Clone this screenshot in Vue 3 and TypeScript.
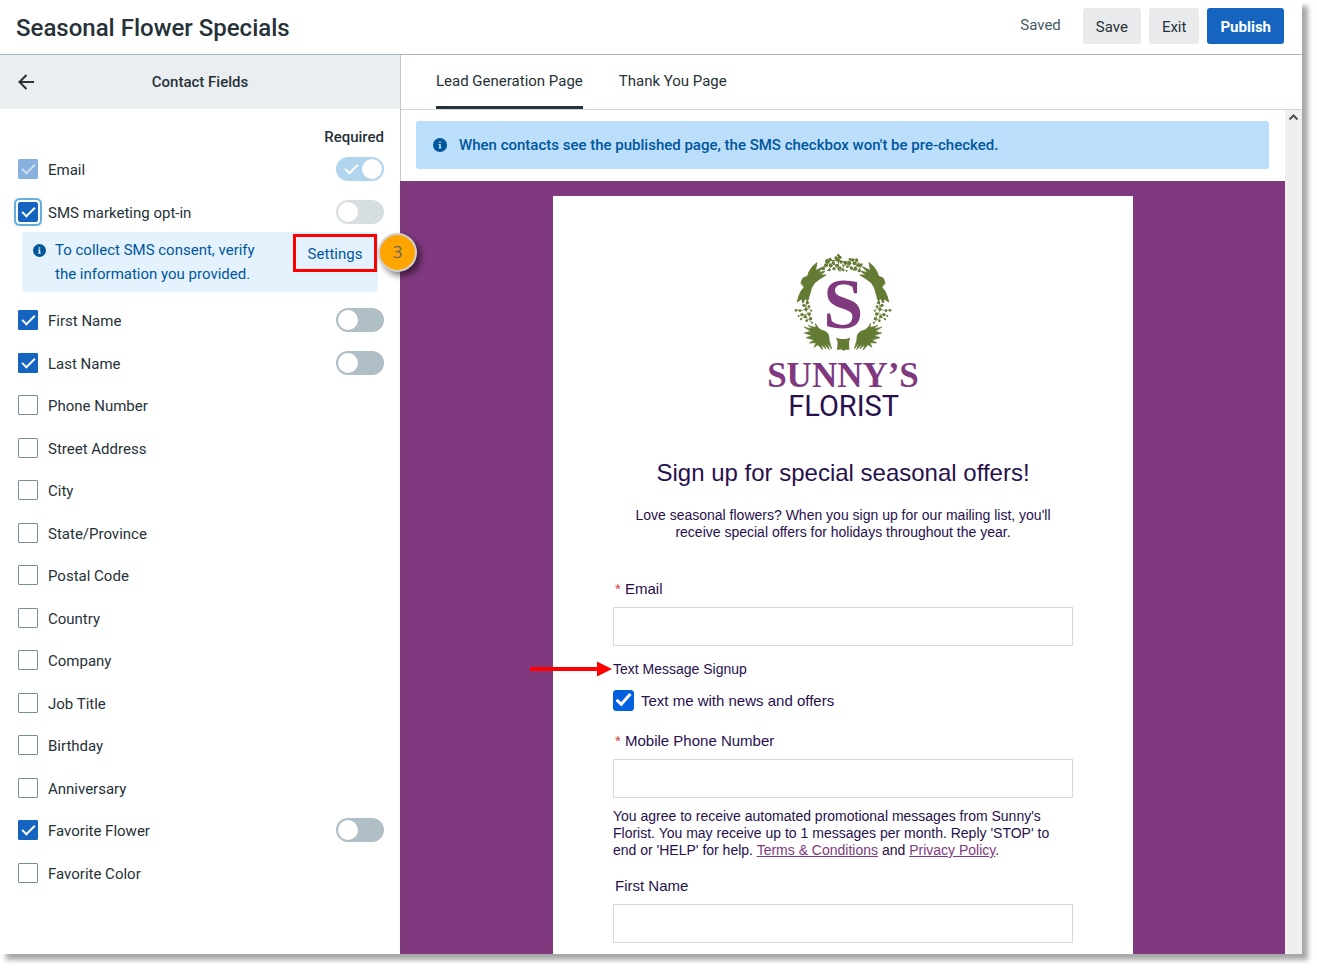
<script setup lang="ts">
import { ref } from 'vue'

interface ContactField {
  id: string
  label: string
  checked: boolean
  locked?: boolean
  toggle?: boolean
  required?: boolean
  toggleLocked?: boolean
  note?: boolean
}

const fields = ref<ContactField[]>([
  { id: 'email', label: 'Email', checked: true, locked: true, toggle: true, required: true, toggleLocked: true },
  { id: 'sms', label: 'SMS marketing opt-in', checked: true, toggle: true, toggleLocked: true, note: true },
  { id: 'first', label: 'First Name', checked: true, toggle: true },
  { id: 'last', label: 'Last Name', checked: true, toggle: true },
  { id: 'phone', label: 'Phone Number', checked: false },
  { id: 'street', label: 'Street Address', checked: false },
  { id: 'city', label: 'City', checked: false },
  { id: 'state', label: 'State/Province', checked: false },
  { id: 'postal', label: 'Postal Code', checked: false },
  { id: 'country', label: 'Country', checked: false },
  { id: 'company', label: 'Company', checked: false },
  { id: 'job', label: 'Job Title', checked: false },
  { id: 'birthday', label: 'Birthday', checked: false },
  { id: 'anniversary', label: 'Anniversary', checked: false },
  { id: 'flower', label: 'Favorite Flower', checked: true, toggle: true },
  { id: 'color', label: 'Favorite Color', checked: false },
])

const tabs = ['Lead Generation Page', 'Thank You Page']
const activeTab = ref(tabs[0])
const textMe = ref(true)
const email = ref('')
const mobile = ref('')
const firstName = ref('')

// Small blossoms on the left side of the wreath: x, y, radius
const berries: number[][] = [
  [168, 211, 4], [180, 212, 4], [192, 196, 5], [202, 188, 5], [186, 224, 5], [198, 208, 5], [207, 200, 4],
  [183, 238, 3], [196, 230, 5], [208, 222, 5], [212, 236, 5], [200, 242, 4], [216, 248, 3], [204, 174, 4],
  [190, 185, 3], [176, 228, 3], [214, 212, 3],
]
// Blossoms along the top of the wreath
const blossoms: number[][] = [
  [250, 86, 5], [258, 76, 6], [262, 64, 7], [270, 58, 5], [272, 76, 6], [268, 90, 4], [280, 68, 5],
  [282, 86, 5], [290, 76, 5], [294, 60, 6], [288, 54, 5], [300, 52, 5], [295, 46, 4], [303, 66, 5],
  [300, 84, 5], [309, 76, 3], [310, 90, 4], [316, 68, 6], [322, 80, 4], [320, 92, 3], [328, 70, 6],
  [334, 84, 5], [338, 60, 5], [344, 70, 6], [350, 60, 5], [346, 86, 6], [356, 76, 6], [364, 74, 4],
  [358, 92, 5], [330, 58, 4],
]
</script>

<template>
  <div class="stage">
    <div class="window">
      <header class="topbar">
        <h1>Seasonal Flower Specials</h1>
        <span class="saved">Saved</span>
        <div class="actions">
          <button type="button">Save</button>
          <button type="button">Exit</button>
          <button type="button" class="primary">Publish</button>
        </div>
      </header>

      <div class="body">
        <aside class="sidebar">
          <div class="panel-head">
            <button type="button" class="back" aria-label="Back">
              <svg width="16" height="16" viewBox="0 0 16 16" fill="none" stroke="#263238" stroke-width="2">
                <path d="M16 8H1.5M8.500 1L1.500 8L8.500 15" />
              </svg>
            </button>
            <h2>Contact Fields</h2>
          </div>
          <div class="required">Required</div>
          <ul class="fields">
            <li v-for="f in fields" :key="f.id">
              <div class="row">
                <input
                  :id="f.id"
                  v-model="f.checked"
                  type="checkbox"
                  class="box"
                  :class="{ focused: f.note }"
                  :disabled="f.locked"
                />
                <label :for="f.id">{{ f.label }}</label>
                <input
                  v-if="f.toggle"
                  v-model="f.required"
                  type="checkbox"
                  role="switch"
                  class="switch"
                  :aria-label="f.label + ' required'"
                  :disabled="f.toggleLocked"
                />
              </div>
              <div v-if="f.note" class="note">
                <svg class="info" width="13" height="13" viewBox="0 0 14 14">
                  <circle cx="7" cy="7" r="7" fill="#01579b" />
                  <path d="M6.200 3.500h1.600v1.500H6.200zM5.500 6h2.300v3.500h.7v1h-3v-1h.7V7h-.7z" fill="#e3f2fd" />
                </svg>
                <p>To collect SMS consent, verify the information you provided.</p>
                <div class="callout">
                  <button type="button" class="settings">Settings</button>
                  <span class="step">3</span>
                </div>
              </div>
            </li>
          </ul>
        </aside>

        <main class="main">
          <nav class="tabs">
            <button
              v-for="t in tabs"
              :key="t"
              type="button"
              :class="{ active: t === activeTab }"
              @click="activeTab = t"
            >{{ t }}</button>
          </nav>
          <div class="viewport">
            <div class="preview">
              <div class="banner">
                <svg width="14" height="14" viewBox="0 0 14 14">
                  <circle cx="7" cy="7" r="7" fill="#01579b" />
                  <path d="M6.200 3.500h1.600v1.500H6.200zM5.500 6h2.300v3.500h.7v1h-3v-1h.7V7h-.7z" fill="#bbdefb" />
                </svg>
                <span>When contacts see the published page, the SMS checkbox won't be pre-checked.</span>
              </div>
              <div class="canvas">
                <form class="card" @submit.prevent>
                  <svg class="logo" width="156" height="168" viewBox="75 36 468 504" role="img" aria-label="Sunny's Florist">
                    <defs>
                      <g id="wreath-side">
                        <path stroke="#647b34" stroke-width="3" d="M231 68L217 80L207 96L203 108L188 115L183 130L193 141L183 154L176 170L172 186L185 176L188 188L198 174L202 184L210 160L214 144L224 128L240 116L258 105L240 105L255 94L234 98L251 80L226 92Z" />
                        <path stroke="#647b34" stroke-width="2" d="M192 261Q206 266 216 264L205 256Q218 262 228 262L226 250Q234 266 244 270Q262 274 266 286L268 302L275 327L262 310L268 329L252 312L258 327L244 314L248 330L234 314L222 322L228 308L208 309L222 300L198 293L216 287L193 279L212 274Z" />
                        <path d="M168 211H186L198 208M180 238L196 230L216 248M186 224L208 222M192 196L214 212M204 176L196 208L212 236" fill="none" stroke="#647b34" stroke-width="2" />
                        <circle v-for="(b, i) in berries" :key="i" :cx="b[0]" :cy="b[1]" :r="b[2]" />
                      </g>
                    </defs>
                    <g fill="#647b34">
                      <use href="#wreath-side" />
                      <use href="#wreath-side" transform="translate(618 0) scale(-1 1)" />
                      <path d="M288 293L302 297H318L331 293L327 306L328 329L316 329L310 333L304 328L291 330L293 306Z" />
                      <path d="M250 86L272 62L294 60L316 68L344 58L364 78L354 94M262 92L282 72L300 94L320 70L340 92L352 72M295 44V92" fill="none" stroke="#647b34" stroke-width="3" />
                      <circle v-for="(b, i) in blossoms" :key="i" :cx="b[0]" :cy="b[1]" :r="b[2]" />
                    </g>
                    <g text-anchor="middle">
                      <text class="mono" x="310" y="265">S</text>
                      <text class="brand" x="309" y="442">SUNNY’S</text>
                      <text class="trade" x="311" y="527">FLORIST</text>
                    </g>
                  </svg>
                  <h3>Sign up for special seasonal offers!</h3>
                  <p class="intro">Love seasonal flowers? When you sign up for our mailing list, you'll receive special offers for holidays throughout the year.</p>

                  <label class="label" for="pv-email"><span class="star">*</span> Email</label>
                  <input id="pv-email" v-model="email" class="text" type="email" />

                  <div class="signup">
                    <svg class="arrow" width="82" height="16" viewBox="0 0 82 16" fill="#f00">
                      <path d="M0 6H67V0.500L82 8L67 15.500V10H0Z" />
                    </svg>
                    Text Message Signup
                  </div>
                  <div class="optin">
                    <input id="pv-text" v-model="textMe" type="checkbox" />
                    <label for="pv-text">Text me with news and offers</label>
                  </div>

                  <label class="label" for="pv-mobile"><span class="star">*</span> Mobile Phone Number</label>
                  <input id="pv-mobile" v-model="mobile" class="text" type="tel" />
                  <p class="legal">You agree to receive automated promotional messages from Sunny's Florist. You may receive up to 1 messages per month. Reply 'STOP' to end or 'HELP' for help. <a href="#">Terms &amp; Conditions</a> and <a href="#">Privacy Policy</a>.</p>

                  <label class="label" for="pv-first">First Name</label>
                  <input id="pv-first" v-model="firstName" class="text" type="text" />
                </form>
              </div>
            </div>
            <div class="scroll">
              <svg width="9" height="7" viewBox="0 0 9 7" fill="none" stroke="#505050" stroke-width="2">
                <path d="M0.500 5.500L4.500 1.500L8.500 5.500" />
              </svg>
            </div>
          </div>
        </main>
      </div>
    </div>
  </div>
</template>

<style>
body {
  margin: 0;
  background: #fff;
}
</style>

<style scoped>
* {
  box-sizing: border-box;
}
h1, h2, h3, p, ul {
  margin: 0;
  padding: 0;
}
button, input {
  font: inherit;
  color: inherit;
  margin: 0;
}
button {
  border: 0;
  background: none;
  padding: 0;
  cursor: pointer;
}
.stage {
  display: flex;
  height: 100vh;
  padding: 0 15px 15px 0;
  overflow: hidden;
}
.window {
  display: flex;
  flex-direction: column;
  flex: 1;
  min-width: 0;
  background: #fff;
  box-shadow: 6px 6px 5px rgba(0, 0, 0, 0.35);
  font: 15px/24px Roboto, sans-serif;
  color: #263238;
}
.topbar {
  display: flex;
  align-items: flex-start;
  flex: none;
  padding: 8px 18px 10px 16px;
  border-bottom: 1px solid #a9bac0;
}
h1 {
  flex: 1;
  font-size: 24px;
  font-weight: 500;
  line-height: 40px;
  height: 36px;
}
.saved {
  line-height: 34px;
  margin-right: 22px;
  color: #455a64;
}
.actions {
  display: flex;
  gap: 8px;
}
.actions button {
  height: 36px;
  padding: 2px 13px 0;
  border-radius: 3px;
  background: #e8eaeb;
}
.actions .primary {
  background: #1565c0;
  color: #fff;
  font-weight: 700;
}
.body {
  display: flex;
  flex: 1;
  min-height: 0;
}
.sidebar {
  flex: none;
  width: 401px;
  border-right: 1px solid #c4c8ca;
}
.panel-head {
  position: relative;
  display: flex;
  align-items: center;
  justify-content: center;
  height: 54px;
  background: #eaeef1;
}
.back {
  position: absolute;
  left: 18px;
  display: flex;
}
h2 {
  font-size: 15px;
  font-weight: 500;
}
.required {
  padding: 16px 16px 8px;
  text-align: right;
  font-weight: 500;
}
.fields {
  list-style: none;
  padding: 0 16px 0 18px;
}
.fields li {
  min-height: 42px;
}
.fields li:nth-child(odd) {
  min-height: 43px;
}
.row {
  display: flex;
  align-items: center;
  height: 24px;
}
.row label {
  flex: 1;
  margin-left: 10px;
  padding-top: 2px;
}
.box {
  position: relative;
  appearance: none;
  width: 20px;
  height: 20px;
  border: 1px solid #78909c;
  border-radius: 1px;
  background: #fff;
}
.box:checked {
  border-color: #1565c0;
  background: #1565c0;
}
.box:checked::after {
  content: '';
  position: absolute;
  left: 3px;
  top: 4px;
  box-sizing: border-box;
  width: 13px;
  height: 7px;
  border: solid #fff;
  border-width: 0 0 2px 2px;
  transform: rotate(-45deg);
}
.box:disabled {
  opacity: 0.5;
}
.box:disabled::after {
  opacity: 0.6;
}
.focused {
  border-radius: 2px;
  box-shadow: 0 0 0 2px #fff, 0 0 0 4px #64b0dc;
}
.switch {
  position: relative;
  appearance: none;
  width: 48px;
  height: 24px;
  border-radius: 12px;
  background: #b0bec5;
}
.switch::before {
  content: '';
  position: absolute;
  left: 2px;
  top: 2px;
  width: 20px;
  height: 20px;
  border-radius: 50%;
  background: #fff;
}
.switch:disabled {
  background: #d7dee1;
}
.switch:checked {
  background: #b0d5ec;
}
.switch:checked::before {
  left: 26px;
}
.switch:checked::after {
  content: '';
  position: absolute;
  left: 9px;
  top: 7px;
  box-sizing: border-box;
  width: 13px;
  height: 7px;
  border: solid #fff;
  border-width: 0 0 2px 2px;
  transform: rotate(-45deg);
}
.note {
  display: flex;
  align-items: flex-start;
  margin: 8px 6px 16px 4px;
  padding: 2px 1px 0 11px;
  height: 60px;
  border-radius: 3px;
  background: #e3f2fd;
  color: #01579b;
}
.note .info {
  flex: none;
  margin-top: 10px;
}
.note p {
  flex: 1;
  margin: 4px 30px 0 9px;
}
.callout {
  position: relative;
}
.settings {
  display: block;
  width: 84px;
  height: 38px;
  padding-top: 2px;
  border: 3px solid #f00;
}
.step {
  position: absolute;
  left: 85px;
  top: -1px;
  z-index: 2;
  width: 39px;
  height: 39px;
  border: 2px solid #d0d0d0;
  border-radius: 50%;
  background: #ffa500;
  box-shadow: 4px 4px 6px rgba(0, 0, 0, 0.5);
  color: #666;
  font-size: 17px;
  line-height: 34px;
  text-align: center;
  font-family: 'Open Sans', sans-serif;
}
.main {
  display: flex;
  flex-direction: column;
  flex: 1;
  min-width: 0;
}
.tabs {
  display: flex;
  flex: none;
  gap: 36px;
  height: 55px;
  padding-left: 35px;
  border-bottom: 1px solid #cfd8dc;
}
.tabs button {
  height: 54px;
  border-bottom: 3px solid transparent;
}
.tabs .active {
  border-color: #263238;
}
.viewport {
  display: flex;
  flex: 1;
  min-height: 0;
}
.preview {
  display: flex;
  flex-direction: column;
  flex: 1;
  min-width: 0;
}
.banner {
  display: flex;
  align-items: center;
  flex: none;
  gap: 12px;
  height: 48px;
  margin: 11px 16px 12px 15px;
  padding-left: 17px;
  border-radius: 3px;
  background: #bbdefb;
  color: #01579b;
  font-weight: 500;
}
.canvas {
  display: flex;
  justify-content: center;
  flex: 1;
  min-height: 0;
  margin-left: -1px;
  padding: 15px 0 0 1px;
  overflow: hidden;
  background: #80397e;
}
.card {
  display: flex;
  flex-direction: column;
  width: 580px;
  height: max-content;
  min-height: 100%;
  padding: 56px 60px 40px;
  background: #fff;
  color: #28104e;
  font: 15px/17px 'Liberation Sans', Arial, sans-serif;
}
.logo {
  flex: none;
  align-self: center;
  overflow: visible;
}
.mono, .brand {
  font-family: 'Liberation Serif', 'Times New Roman', serif;
  font-weight: 700;
  fill: #80397e;
}
.mono {
  font-size: 216px;
}
.brand {
  font-size: 105px;
}
.trade {
  font-family: Roboto, sans-serif;
  font-size: 87px;
  fill: #28104e;
}
h3 {
  margin-top: 39px;
  font-size: 24px;
  font-weight: 400;
  line-height: 28px;
  text-align: center;
}
.intro {
  margin: 20px 0 26px;
  font-size: 14px;
  text-align: center;
}
.label {
  margin: 13px 2px 10px;
}
.star {
  color: #e53935;
}
.text {
  flex: none;
  width: 100%;
  height: 39px;
  padding: 0 10px;
  border: 1px solid #d8d8d8;
  background: #fff;
}
.signup {
  position: relative;
  margin-top: 15px;
  font-size: 14px;
}
.arrow {
  position: absolute;
  left: -83px;
  top: 0;
}
.optin {
  display: flex;
  align-items: center;
  gap: 7px;
  margin: 12px 0 8px;
}
.optin input {
  position: relative;
  appearance: none;
  width: 21px;
  height: 21px;
  border: 1px solid #0060df;
  border-radius: 3px;
}
.optin input:checked {
  background: #0060df;
}
.optin input:checked::after {
  content: '';
  position: absolute;
  left: 2px;
  top: 3px;
  box-sizing: border-box;
  width: 15px;
  height: 8px;
  border: solid #fff;
  border-width: 0 0 3px 3px;
  transform: rotate(-48deg);
}
.legal {
  margin: 10px 0 5px;
  font-size: 14px;
}
.legal a {
  color: #80397e;
}
.scroll {
  display: flex;
  justify-content: center;
  align-items: flex-start;
  flex: none;
  width: 17px;
  padding-top: 4px;
  background: #efefef;
}
</style>
